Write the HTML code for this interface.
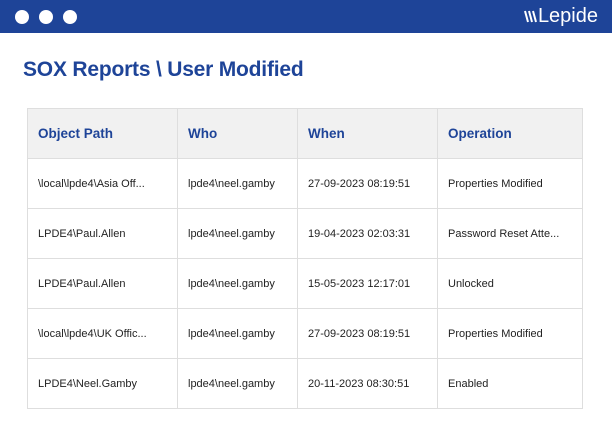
<!DOCTYPE html>
<html><head><style>
body{margin:0;width:612px;height:430px;background:#fff;font-family:"Liberation Sans",sans-serif;overflow:hidden;position:relative}
.bar{position:absolute;left:0;top:0;width:612px;height:33px;background:#1e4498}
.dot{position:absolute;top:10px;width:14px;height:14px;border-radius:50%;background:#fff}
.logo{position:absolute;right:14px;top:5px;color:#fff;font-size:20px;font-weight:300}
h1{position:absolute;left:23px;top:58px;margin:0;font-size:21px;color:#1e4498;font-weight:bold;letter-spacing:-.2px}
table{position:absolute;left:27px;top:108px;border-collapse:collapse;width:555px;table-layout:fixed}
td,th{border:1px solid #dedede;height:49px;padding:0 0 0 10px;text-align:left;font-size:11px;color:#222;white-space:nowrap;overflow:hidden;box-sizing:border-box}
tr{height:50px}
th{background:#f1f1f1;color:#1e4498;font-size:13.5px;font-weight:bold}
</style></head><body>
<div class="bar"><div class="dot" style="left:15px"></div><div class="dot" style="left:39px"></div><div class="dot" style="left:63px"></div>
<div class="logo"><svg width="14" height="13" viewBox="0 0 14 13" style="vertical-align:-1px"><g stroke="#fff" stroke-width="2"><path d="M1 1l3 11M5 1l3 11M9 1l3 11"/></g></svg>Lepide</div></div>
<h1>SOX Reports \ User Modified</h1>
<table>
<colgroup><col style="width:150px"><col style="width:120px"><col style="width:140px"><col style="width:145px"></colgroup>
<tr><th>Object Path</th><th>Who</th><th>When</th><th>Operation</th></tr>
<tr><td>\local\lpde4\Asia Off...</td><td>lpde4\neel.gamby</td><td>27-09-2023 08:19:51</td><td>Properties Modified</td></tr>
<tr><td>LPDE4\Paul.Allen</td><td>lpde4\neel.gamby</td><td>19-04-2023 02:03:31</td><td>Password Reset Atte...</td></tr>
<tr><td>LPDE4\Paul.Allen</td><td>lpde4\neel.gamby</td><td>15-05-2023 12:17:01</td><td>Unlocked</td></tr>
<tr><td>\local\lpde4\UK Offic...</td><td>lpde4\neel.gamby</td><td>27-09-2023 08:19:51</td><td>Properties Modified</td></tr>
<tr><td>LPDE4\Neel.Gamby</td><td>lpde4\neel.gamby</td><td>20-11-2023 08:30:51</td><td>Enabled</td></tr>
</table>
</body></html>
